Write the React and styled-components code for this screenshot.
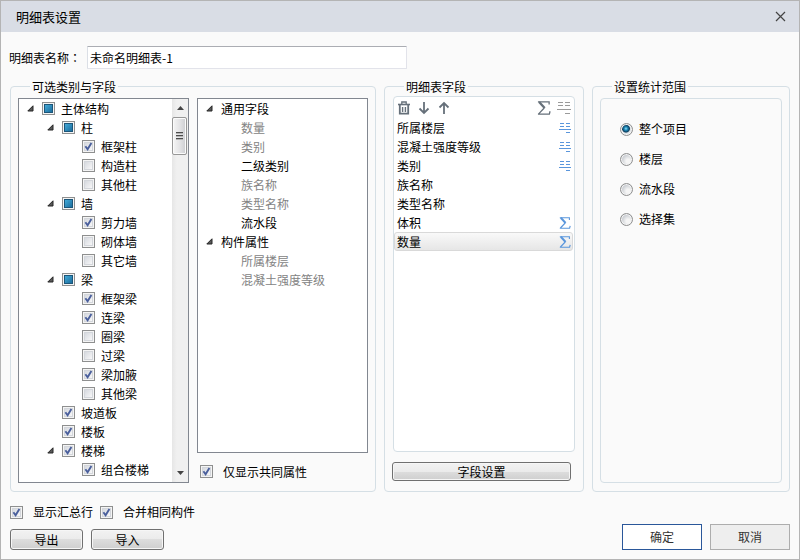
import React, { useEffect, useRef, useState } from "react";
import styled, { createGlobalStyle, css } from "styled-components";

const GlobalStyle = createGlobalStyle`
  * { box-sizing: border-box; }
  body {
    margin: 0;
    background: #fafafa;
    color: #000;
    font: 12px/18px "Noto Sans CJK SC", sans-serif;
  }
  button, input { font: inherit; color: inherit; }
`;

const Dialog = styled.main`
  display: flex;
  flex-direction: column;
  min-height: 100vh;
  border: 1px solid #b4b4b4;
  background: #fafafa;
`;

const TitleBar = styled.header`
  display: flex;
  align-items: center;
  justify-content: space-between;
  height: 31px;
  padding: 0 13px 0 15px;
  background: #d9dde5;
`;

const Title = styled.h1`
  margin: 0;
  font-size: 13px;
  font-weight: 400;
`;

const CloseButton = styled.button`
  display: flex;
  padding: 0;
  border: 0;
  background: none;
`;

const Body = styled.div`
  flex: 1;
  display: flex;
  flex-direction: column;
  padding: 14px 9px 9px;
`;

const NameRow = styled.div`
  display: flex;
  align-items: center;
`;

const NameLabel = styled.label`
  width: 78px;
  margin-left: -1px;
  flex: none;
  white-space: nowrap;
`;

const Colon = styled.span`
  font-family: "Noto Sans CJK TC", sans-serif;
`;

const NameInput = styled.input`
  width: 41%;
  height: 23px;
  padding: 0 2px;
  border: 1px solid #e2e3ea;
  border-top-color: #abadb3;
  border-left-color: #dbdfe6;
  border-radius: 1px;
  background: #fff;
  outline: none;
`;

const Groups = styled.div`
  flex: 1;
  display: grid;
  grid-template-columns: 366fr 200fr 198fr;
  gap: 8px;
  margin-top: 9px;
`;

const Group = styled.fieldset`
  display: flex;
  gap: ${(p) => (p.$column ? 10 : 8)}px;
  min-width: 0;
  margin: 0;
  padding: ${(p) => p.$pad || "3px 7px 8px"};
  flex-direction: ${(p) => (p.$column ? "column" : "row")};
  border: 1px solid #d5dfe5;
  border-radius: 4px;
`;

const Legend = styled.legend`
  height: 17px;
  margin-left: ${(p) => p.$inset}px;
  padding: 0 2px;
  line-height: 17px;
`;

const Column = styled.div`
  flex: 1;
  display: flex;
  flex-direction: column;
  min-width: 0;
`;

const ListBox = styled.div`
  flex: 1;
  display: flex;
  border: 1px solid #828790;
  background: #fff;
  overflow: hidden;
`;

const List = styled.ul`
  flex: 1;
  min-width: 0;
  margin: 0;
  padding: 0;
  list-style: none;
`;

const TreeRow = styled.li`
  display: flex;
  align-items: center;
  height: 19px;
  padding-left: ${(p) => 8 + p.$level * 20}px;
  color: ${(p) => (p.$muted ? "#838383" : "#000")};
  white-space: nowrap;
`;

const Twisty = styled.span`
  display: flex;
  width: 15px;
  flex: none;
`;

const CheckLabel = styled.label`
  display: flex;
  align-items: center;
  gap: ${(p) => p.$gap || 6}px;
  white-space: nowrap;
`;

const CheckFrame = styled.span`
  display: grid;
  flex: none;
  width: 13px;
  height: 13px;
  > * { grid-area: 1 / 1; }
  svg { pointer-events: none; }
`;

const CheckInput = styled.input`
  appearance: none;
  width: 13px;
  height: 13px;
  margin: 0;
  border: 1px solid #8e8f8f;
  background: linear-gradient(135deg, #cdd1d8, #f6f6f7 80%);
  box-shadow: inset 0 0 0 1px #f4f4f4, inset 0 0 0 2px #d3d6db;
  ${(p) =>
    p.$partial &&
    css`
      background: linear-gradient(135deg, #4fbbe8, #1c6f9f 80%);
      box-shadow: inset 0 0 0 1px #f4f4f4, inset 0 0 0 2px #1c5578;
    `}
`;

const ScrollBar = styled.div`
  display: flex;
  flex-direction: column;
  align-items: center;
  width: 16px;
  flex: none;
  background: linear-gradient(90deg, #e6e6e6, #f0f0f0 30%, #f0f0f0);
`;

const ScrollArrow = styled.span`
  display: grid;
  place-items: center;
  width: 16px;
  height: 18px;
`;

const Thumb = styled.div`
  display: flex;
  flex-direction: column;
  align-items: center;
  justify-content: center;
  gap: 1px;
  width: 15px;
  height: 38px;
  margin-bottom: auto;
  margin-right: 1px;
  border: 1px solid #979797;
  border-radius: 2px;
  background: linear-gradient(90deg, #f5f5f5, #e4e4e6 50%, #cdced1);
  box-shadow: inset 0 0 0 1px #fbfbfb;
`;

const Grip = styled.span`
  width: 7px;
  height: 2px;
  border-top: 1px solid #4c4c4c;
  border-bottom: 1px solid #b5b5b5;
`;

const CommonOnly = styled.div`
  display: flex;
  align-items: center;
  height: 30px;
  padding: 7px 3px 0;
`;

const FieldBox = styled.div`
  flex: 1;
  display: flex;
  flex-direction: column;
  margin: 0 0 0 1px;
  border: 1px solid #d5dfe5;
  border-radius: 4px;
  background: #fff;
`;

const Toolbar = styled.div`
  display: flex;
  align-items: center;
  gap: 6px;
  height: 21px;
  padding: 0 2px 0 3px;
`;

const IconButton = styled.button`
  display: flex;
  padding: 0;
  border: 0;
  background: none;
`;

const Spacer = styled.span`
  flex: 1;
`;

const FieldRow = styled.li`
  display: flex;
  align-items: center;
  justify-content: space-between;
  height: 19px;
  margin-right: 1px;
  padding: 0 1px 0 2px;
  border: 1px solid transparent;
  border-radius: 3px;
  ${(p) =>
    p.$selected &&
    css`
      border-color: #d9d9d9;
      background: linear-gradient(#f9f9f9, #e6e6e6);
    `}
`;

const ClassicButton = styled.button`
  display: flex;
  align-items: center;
  justify-content: center;
  width: ${(p) => (p.$wide ? "auto" : "73px")};
  height: ${(p) => (p.$wide ? 19 : 21)}px;
  margin-right: ${(p) => (p.$wide ? 4 : 0)}px;
  padding: 0;
  border: 1px solid #707070;
  border-radius: 3px;
  background: linear-gradient(#f2f2f2, #ebebeb 50%, #dddddd 50%, #cfcfcf);
  box-shadow: inset 0 0 0 1px #f6f6f6;
`;

const RangeBox = styled.div`
  flex: 1;
  padding: 15px 19px;
  border: 1px solid #d5dfe5;
  border-radius: 4px;
`;

const RadioLabel = styled.label`
  display: flex;
  align-items: center;
  gap: 6px;
  height: 30px;
`;

const RadioInput = styled.input`
  appearance: none;
  width: 13px;
  height: 13px;
  margin: 0;
  border: 1px solid #8e8f8f;
  border-radius: 50%;
  background: radial-gradient(circle at 65% 65%, #f5f5f5 20%, #c3c7cd 70%);
  box-shadow: inset 0 0 0 1px #f4f4f4;
  &:checked {
    background: radial-gradient(circle at 45% 42%, #8fe0fb 0, #1c86b4 20%, #0c3c5c 40%, #dce1e5 50%);
  }
`;

const Footer = styled.footer`
  display: flex;
  align-items: flex-end;
  justify-content: space-between;
  margin-top: 11px;
`;

const FooterLeft = styled.div`
  display: flex;
  flex-direction: column;
  gap: 8px;
`;

const Inline = styled.div`
  display: flex;
  gap: ${(p) => p.$gap || 8}px;
`;

const ActionButton = styled.button`
  width: 80px;
  height: 26px;
  padding: 0;
  border: 1px solid ${(p) => (p.$primary ? "#2a579a" : "#adadad")};
  background: ${(p) => (p.$primary ? "#fff" : "#eeeeee")};
  color: #333;
`;

const ExpandIcon = () => (
  <svg width="7" height="7" viewBox="0 0 7 7" aria-hidden="true">
    <path d="M6 .8V6H.8Z" fill="#595959" stroke="#262626" strokeWidth="1" />
  </svg>
);

const TickIcon = () => (
  <svg width="13" height="13" viewBox="0 0 13 13" aria-hidden="true">
    <path d="M3.4 6.2 5.6 9.2 9.4 3" fill="none" stroke="#4a5f9c" strokeWidth="1.9" />
  </svg>
);

const TrashIcon = () => (
  <svg width="14" height="14" viewBox="0 0 14 14" fill="none" stroke="#66707a" aria-hidden="true">
    <path d="M1 3.5H13" strokeWidth="1.6" />
    <path d="M4.8 3V1H9.2V3" strokeWidth="1.3" />
    <path d="M2.8 4V12.7H11.2V4" strokeWidth="1.8" />
    <path d="M5.6 6V11M8.4 6V11" strokeWidth="1.4" />
  </svg>
);

const ArrowIcon = ({ up }) => (
  <svg width="14" height="14" viewBox="0 0 14 14" fill="none" stroke="#66707a" strokeWidth="1.8" aria-hidden="true">
    <path d={up ? "M7 13V2M2.5 6.5 7 2 11.5 6.5" : "M7 1V12M2.5 7.5 7 12 11.5 7.5"} />
  </svg>
);

const SumIcon = ({ size = 12, color = "#5a96dc" }) => (
  <svg width={size} height={size} viewBox="0 0 12 12" fill="none" stroke={color} aria-hidden="true">
    <path d="M.8 .7H10.4V3M.8 11.2H10.6L11.2 8.8M1.4 11 6.2 6" strokeWidth="1.1" />
    <path d="M1.8 .8 6.6 6" strokeWidth="2" />
  </svg>
);

const LinesIcon = () => (
  <svg width="12" height="12" viewBox="0 0 12 12" fill="none" stroke="#5a96dc" aria-hidden="true">
    <path d="M1 1.5H5M7 1.5H11M1 4.5H5M7 4.5H11M0 7.5H12M7 10.5H11" strokeWidth="1" />
  </svg>
);

const ToolLinesIcon = () => (
  <svg width="15" height="14" viewBox="0 0 15 14" fill="none" stroke="#9a9a9a" aria-hidden="true">
    <path d="M1 1.5H6M8 1.5H13M1 4.5H6M8 4.5H13M0 8.5H14M8 12.5H13" strokeWidth="1" />
  </svg>
);

function CheckBox({ state, gap, children }) {
  const [value, setValue] = useState(state);
  const ref = useRef(null);
  useEffect(() => {
    ref.current.indeterminate = value === "partial";
  }, [value]);
  return (
    <CheckLabel $gap={gap}>
      <CheckFrame>
        <CheckInput
          ref={ref}
          type="checkbox"
          $partial={value === "partial"}
          checked={value === "on"}
          onChange={(e) => setValue(e.target.checked ? "on" : "off")}
        />
        {value === "on" && <TickIcon />}
      </CheckFrame>
      <span>{children}</span>
    </CheckLabel>
  );
}

const categories = [
  ["主体结构", 0, "partial", true],
  ["柱", 1, "partial", true],
  ["框架柱", 2, "on"],
  ["构造柱", 2, "off"],
  ["其他柱", 2, "off"],
  ["墙", 1, "partial", true],
  ["剪力墙", 2, "on"],
  ["砌体墙", 2, "off"],
  ["其它墙", 2, "off"],
  ["梁", 1, "partial", true],
  ["框架梁", 2, "on"],
  ["连梁", 2, "on"],
  ["圈梁", 2, "off"],
  ["过梁", 2, "off"],
  ["梁加腋", 2, "on"],
  ["其他梁", 2, "off"],
  ["坡道板", 1, "on"],
  ["楼板", 1, "on"],
  ["楼梯", 1, "on", true],
  ["组合楼梯", 2, "on"],
];

const available = [
  { name: "通用字段", open: true },
  { name: "数量", muted: true },
  { name: "类别", muted: true },
  { name: "二级类别" },
  { name: "族名称", muted: true },
  { name: "类型名称", muted: true },
  { name: "流水段" },
  { name: "构件属性", open: true },
  { name: "所属楼层", muted: true },
  { name: "混凝土强度等级", muted: true },
];

const fields = [
  ["所属楼层", "lines"],
  ["混凝土强度等级", "lines"],
  ["类别", "lines"],
  ["族名称"],
  ["类型名称"],
  ["体积", "sum"],
  ["数量", "sum"],
];

const ranges = ["整个项目", "楼层", "流水段", "选择集"];

export default function App() {
  const [range, setRange] = useState(ranges[0]);
  const [selected, setSelected] = useState("数量");
  return (
    <>
      <GlobalStyle />
      <Dialog>
        <TitleBar>
          <Title>明细表设置</Title>
          <CloseButton aria-label="关闭">
            <svg width="11" height="11" viewBox="0 0 11 11" stroke="#444" strokeWidth="1.2" aria-hidden="true">
              <path d="M1 1 10 10M10 1 1 10" />
            </svg>
          </CloseButton>
        </TitleBar>
        <Body>
          <NameRow>
            <NameLabel htmlFor="schedule-name">
              明细表名称<Colon>：</Colon>
            </NameLabel>
            <NameInput id="schedule-name" defaultValue="未命名明细表-1" />
          </NameRow>

          <Groups>
            <Group>
              <Legend $inset={12}>可选类别与字段</Legend>
              <Column>
                <ListBox>
                  <List>
                    {categories.map(([name, level, state, open]) => (
                      <TreeRow key={name} $level={level}>
                        <Twisty>{open && <ExpandIcon />}</Twisty>
                        <CheckBox state={state}>{name}</CheckBox>
                      </TreeRow>
                    ))}
                  </List>
                  <ScrollBar aria-hidden="true">
                    <ScrollArrow>
                      <svg width="7" height="4" viewBox="0 0 7 4"><path d="M0 4 3.5 0 7 4Z" fill="#444" /></svg>
                    </ScrollArrow>
                    <Thumb><Grip /><Grip /><Grip /></Thumb>
                    <ScrollArrow>
                      <svg width="7" height="4" viewBox="0 0 7 4"><path d="M0 0 3.5 4 7 0Z" fill="#444" /></svg>
                    </ScrollArrow>
                  </ScrollBar>
                </ListBox>
              </Column>
              <Column>
                <ListBox>
                  <List>
                    {available.map(({ name, open, muted }) => (
                      <TreeRow key={name} $level={open ? 0 : 1} $muted={muted}>
                        <Twisty>{open && <ExpandIcon />}</Twisty>
                        {name}
                      </TreeRow>
                    ))}
                  </List>
                </ListBox>
                <CommonOnly>
                  <CheckBox state="on" gap={10}>仅显示共同属性</CheckBox>
                </CommonOnly>
              </Column>
            </Group>

            <Group $column $pad="1px 8px 10px 7px">
              <Legend $inset={12}>明细表字段</Legend>
              <FieldBox>
                <Toolbar>
                  <IconButton aria-label="删除"><TrashIcon /></IconButton>
                  <IconButton aria-label="下移"><ArrowIcon /></IconButton>
                  <IconButton aria-label="上移"><ArrowIcon up /></IconButton>
                  <Spacer />
                  <IconButton aria-label="合计"><SumIcon size={14} color="#66707a" /></IconButton>
                  <IconButton aria-label="分组"><ToolLinesIcon /></IconButton>
                </Toolbar>
                <List>
                  {fields.map(([name, icon]) => (
                    <FieldRow key={name} $selected={name === selected} onClick={() => setSelected(name)}>
                      {name}
                      {icon === "lines" && <LinesIcon />}
                      {icon === "sum" && <SumIcon />}
                    </FieldRow>
                  ))}
                </List>
              </FieldBox>
              <ClassicButton $wide>字段设置</ClassicButton>
            </Group>

            <Group>
              <Legend $inset={12}>设置统计范围</Legend>
              <RangeBox>
                {ranges.map((name) => (
                  <RadioLabel key={name}>
                    <RadioInput type="radio" name="range" checked={range === name} onChange={() => setRange(name)} />
                    {name}
                  </RadioLabel>
                ))}
              </RangeBox>
            </Group>
          </Groups>

          <Footer>
            <FooterLeft>
              <Inline $gap={7}>
                <CheckBox state="on" gap={10}>显示汇总行</CheckBox>
                <CheckBox state="on" gap={10}>合并相同构件</CheckBox>
              </Inline>
              <Inline>
                <ClassicButton>导出</ClassicButton>
                <ClassicButton>导入</ClassicButton>
              </Inline>
            </FooterLeft>
            <Inline>
              <ActionButton $primary>确定</ActionButton>
              <ActionButton>取消</ActionButton>
            </Inline>
          </Footer>
        </Body>
      </Dialog>
    </>
  );
}
